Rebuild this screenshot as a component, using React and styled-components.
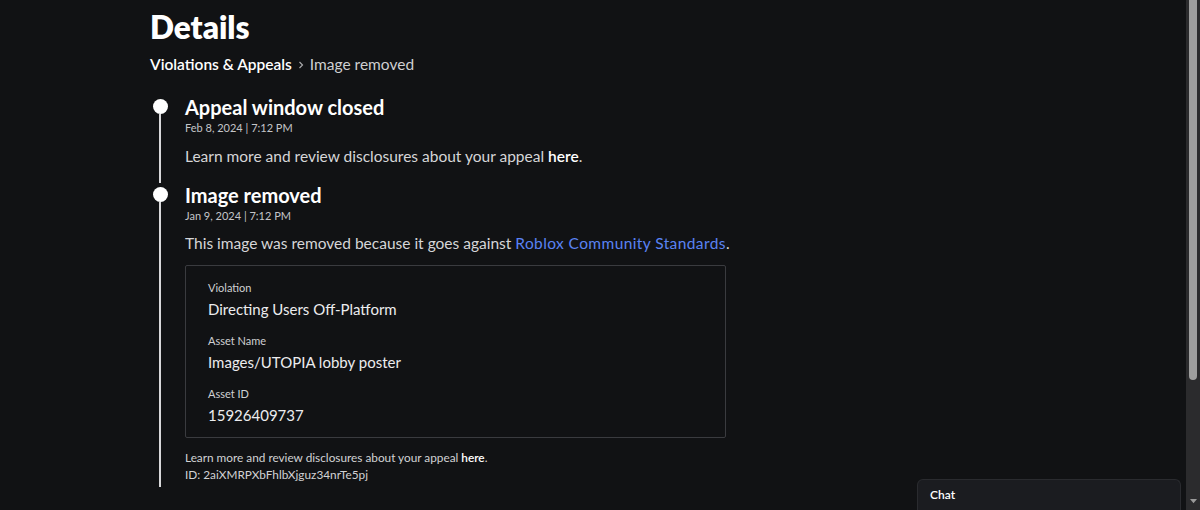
import React from "react";
import styled, { createGlobalStyle } from "styled-components";

const GlobalStyle = createGlobalStyle`
  body {
    margin: 0;
    background: #111214;
    font-family: "Lato", "Open Sans", sans-serif;
  }
`;

const events = [
  {
    title: "Appeal window closed",
    date: "Feb 8, 2024 | 7:12 PM",
  },
  {
    title: "Image removed",
    date: "Jan 9, 2024 | 7:12 PM",
  },
];

const details = [
  { label: "Violation", value: "Directing Users Off-Platform" },
  { label: "Asset Name", value: "Images/UTOPIA lobby poster" },
  { label: "Asset ID", value: "15926409737" },
];

const App = () => {
  return (
    <Page>
      <GlobalStyle />
      <Main>
        <Title>Details</Title>
        <Breadcrumb>
          <Crumb>Violations &amp; Appeals</Crumb>
          <Chevron viewBox="0 0 10 10">
            <path d="M3.5 2 L6.5 5 L3.5 8" />
          </Chevron>
          <Current>Image removed</Current>
        </Breadcrumb>

        <Timeline>
          <Event>
            <Rail>
              <Dot />
              <Line />
            </Rail>
            <EventBody $pad={16}>
              <EventTitle>{events[0].title}</EventTitle>
              <EventDate>{events[0].date}</EventDate>
              <Text $top={9}>
                Learn more and review disclosures about your appeal <Strong>here</Strong>.
              </Text>
            </EventBody>
          </Event>

          <Event>
            <Rail>
              <Dot />
              <Line />
            </Rail>
            <EventBody $pad={4}>
              <EventTitle>{events[1].title}</EventTitle>
              <EventDate>{events[1].date}</EventDate>
              <Text $top={8}>
                This image was removed because it goes against <Link>Roblox Community Standards</Link>.
              </Text>
              <DetailBox>
                {details.map((d, i) => (
                  <DetailItem key={d.label} $first={i === 0}>
                    <DetailLabel>{d.label}</DetailLabel>
                    <DetailValue>{d.value}</DetailValue>
                  </DetailItem>
                ))}
              </DetailBox>
              <SmallText $top={11}>
                Learn more and review disclosures about your appeal <Strong>here</Strong>.
              </SmallText>
              <SmallText>ID: 2aiXMRPXbFhlbXjguz34nrTe5pj</SmallText>
            </EventBody>
          </Event>
        </Timeline>
      </Main>

      <Scrollbar>
        <Thumb />
        <ScrollArrow viewBox="0 0 10 8">
          <path d="M1 1 L9 1 L5 6 Z" />
        </ScrollArrow>
      </Scrollbar>

      <ChatDock>Chat</ChatDock>
    </Page>
  );
};

// Styled Components
const Page = styled.div`
  position: relative;
  display: flex;
  height: 510px;
  overflow: hidden;
  background: #111214;
`;

const Main = styled.div`
  flex: 1;
  padding: 9px 0 0 150px;
`;

const Title = styled.h1`
  margin: 0;
  font-size: 31.5px;
  line-height: 36px;
  font-weight: 800;
  color: #ffffff;
`;

const Breadcrumb = styled.div`
  display: flex;
  align-items: center;
  gap: 4px;
  margin-top: 9px;
  height: 20px;
  font-size: 15.5px;
`;

const Crumb = styled.span`
  color: #ffffff;
  font-weight: 600;
`;

const Current = styled.span`
  color: #cfcfd1;
`;

const Chevron = styled.svg`
  width: 10px;
  height: 10px;
  margin-top: 2px;
  fill: none;
  stroke: #a8a8aa;
  stroke-width: 1.2;
`;

const Timeline = styled.div`
  margin-top: 21px;
  display: flex;
  flex-direction: column;
`;

const Event = styled.div`
  display: grid;
  grid-template-columns: 20px 1fr;
  column-gap: 15px;
`;

const Rail = styled.div`
  display: flex;
  flex-direction: column;
  align-items: center;
`;

const Dot = styled.div`
  width: 15px;
  height: 15px;
  margin-top: 4px;
  border-radius: 50%;
  background: #ffffff;
  flex-shrink: 0;
`;

const Line = styled.div`
  flex: 1;
  width: 2px;
  background: #d8d8da;
`;

const EventBody = styled.div`
  padding-bottom: ${(p) => p.$pad}px;
`;

const EventTitle = styled.div`
  font-size: 20px;
  line-height: 24px;
  font-weight: 700;
  color: #ffffff;
`;

const EventDate = styled.div`
  margin-top: 1px;
  font-size: 11px;
  line-height: 16px;
  color: #c4c5c8;
`;

const Text = styled.div`
  margin-top: ${(p) => p.$top || 0}px;
  font-size: 15.5px;
  line-height: 22px;
  color: #d6d6d8;
`;

const Strong = styled.span`
  color: #ffffff;
  font-weight: 600;
`;

const Link = styled.span`
  color: #5a83f3;
  letter-spacing: 0.4px;
`;

const DetailBox = styled.div`
  margin-top: 11px;
  width: 541px;
  box-sizing: border-box;
  border: 1px solid #3a3b3f;
  border-radius: 2px;
  padding: 14px 22px 11px;
`;

const DetailItem = styled.div`
  margin-top: ${(p) => (p.$first ? 0 : 13)}px;
`;

const DetailLabel = styled.div`
  font-size: 11px;
  line-height: 16px;
  color: #cfd0d2;
`;

const DetailValue = styled.div`
  margin-top: 2px;
  font-size: 15px;
  line-height: 22px;
  color: #ececee;
`;

const SmallText = styled.div`
  margin-top: ${(p) => p.$top || 0}px;
  font-size: 11.8px;
  line-height: 17px;
  color: #d2d2d4;
`;

const Scrollbar = styled.div`
  width: 14px;
  background: #2b2b2d;
  display: flex;
  flex-direction: column;
  align-items: center;
`;

const Thumb = styled.div`
  width: 8px;
  height: 380px;
  background: #9e9e9e;
  border-radius: 0 0 4px 4px;
`;

const ScrollArrow = styled.svg`
  margin-top: auto;
  margin-bottom: 5px;
  width: 9px;
  height: 7px;
  fill: #9a9a9a;
`;

const ChatDock = styled.div`
  position: absolute;
  right: 19px;
  bottom: 0;
  width: 264px;
  height: 31px;
  box-sizing: border-box;
  padding: 7px 12px 0;
  background: #1b1c20;
  border: 1px solid #2a2b2f;
  border-bottom: none;
  border-radius: 6px 6px 0 0;
  font-size: 12px;
  font-weight: 600;
  color: #ffffff;
`;

export default App;
